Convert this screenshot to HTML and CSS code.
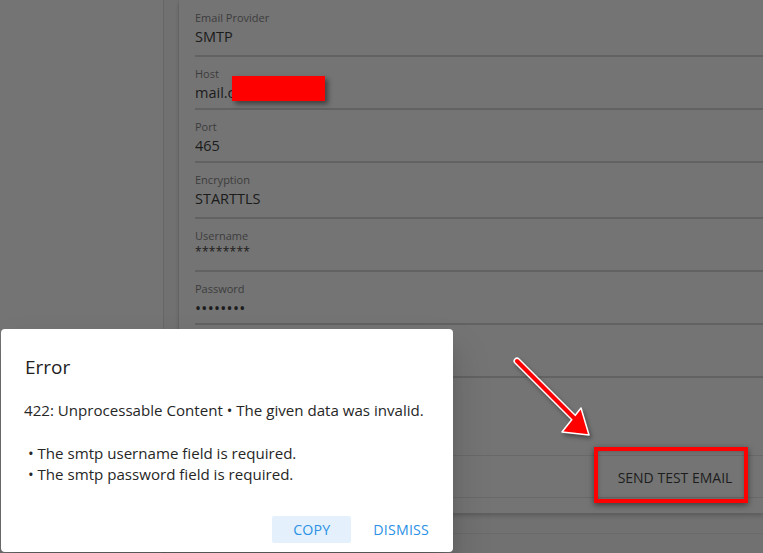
FILE: index.html
```html
<!DOCTYPE html>
<html lang="en">
<head>
    <meta charset="UTF-8">
    <meta name="viewport" content="width=device-width, initial-scale=1.0">
    <title>Email Settings</title>
    <link rel="stylesheet" href="styles.css">
</head>
<body>
    <div class="app">
        <aside class="sidebar"></aside>
        <div class="gutter"></div>
        <main class="content">
            <section class="card">
                <div class="fields">
                    <div class="field tall">
                        <div class="field-label">Email Provider</div>
                        <div class="field-value">SMTP</div>
                    </div>
                    <div class="field">
                        <div class="field-label">Host</div>
                        <div class="field-value">mail.c<span class="redact"></span></div>
                    </div>
                    <div class="field">
                        <div class="field-label">Port</div>
                        <div class="field-value">465</div>
                    </div>
                    <div class="field tall">
                        <div class="field-label">Encryption</div>
                        <div class="field-value">STARTTLS</div>
                    </div>
                    <div class="field">
                        <div class="field-label">Username</div>
                        <div class="field-value masked">********</div>
                    </div>
                    <div class="field">
                        <div class="field-label">Password</div>
                        <div class="field-value dots">&bull;&bull;&bull;&bull;&bull;&bull;&bull;&bull;</div>
                    </div>
                    <div class="field">
                        <div class="field-label">From Address</div>
                        <div class="field-value"></div>
                    </div>
                </div>
                <div class="card-actions">
                    <button class="btn-text">SEND TEST EMAIL</button>
                </div>
            </section>
            <div class="below"></div>
        </main>
    </div>

    <!-- annotation arrow -->
    <svg class="arrow" width="90" height="90" viewBox="0 0 90 90">
        <path d="M6 6 L62 62" stroke="#fff" stroke-width="7" stroke-linecap="round" />
        <path d="M51 77 L78 80 L70 53 Z" fill="#f00" stroke="#fff" stroke-width="1.5" stroke-linejoin="round" />
        <path d="M6 6 L64 64" stroke="#f00" stroke-width="4" stroke-linecap="round" />
    </svg>
    <div class="highlight"></div>

    <div class="dialog">
        <h3 class="dialog-title">Error</h3>
        <div class="dialog-text">422: Unprocessable Content &bull; The given data was invalid.

 &bull; The smtp username field is required.
 &bull; The smtp password field is required.</div>
        <div class="dialog-actions">
            <button class="btn-dialog btn-copy">COPY</button>
            <button class="btn-dialog">DISMISS</button>
        </div>
    </div>
</body>
</html>
```

FILE: styles.css
```css
body {
    margin: 0;
    background-color: #747474;
    font-family: "Open Sans", "Noto Sans", sans-serif;
    color: #222;
    overflow: hidden;
}

.app {
    display: flex;
    height: 553px;
}

.sidebar {
    width: 163px;
    flex-shrink: 0;
    border-right: 1px solid #666;
}

.gutter {
    width: 14px;
    flex-shrink: 0;
    background-color: #717171;
    border-right: 1px solid #6b6b6b;
}

.content {
    flex: 1;
    background-color: #717171;
}

.card {
    background-color: #747474;
    padding: 1px 0 15px 16px;
    box-shadow: 0 3px 4px rgba(0, 0, 0, 0.18);
}

.field {
    height: 53px;
    box-sizing: border-box;
    padding-top: 9px;
    border-bottom: 2px solid #626262;
}

.field.tall {
    height: 56px;
}

.field-label {
    font-size: 11px;
    line-height: 16px;
    color: #3c3c3c;
}

.field-value {
    font-size: 14.5px;
    line-height: 22px;
    color: #1b1b1b;
    position: relative;
}

.field-value.masked {
    line-height: 16px;
    font-size: 12px;
    letter-spacing: 0.3px;
}

.field-value.dots {
    font-size: 16px;
    letter-spacing: 0.3px;
}

.redact {
    position: absolute;
    left: 37px;
    top: -6px;
    width: 93px;
    height: 25px;
    background-color: #f00;
    box-shadow: 3px 3px 5px rgba(0, 0, 0, 0.45);
}

.card-actions {
    margin-top: 77px;
    margin-left: -16px;
    height: 41px;
    border-top: 1px solid #696969;
    border-bottom: 1px solid #696969;
    display: flex;
    justify-content: flex-end;
    align-items: center;
    padding-right: 23px;
}

.btn-text {
    background: none;
    border: none;
    font-family: inherit;
    font-size: 14px;
    color: #1d1d1d;
    padding: 0;
    width: 130px;
    height: 36px;
    margin-top: 1px;
}

.below {
    height: 20px;
    border-bottom: 1px solid #6a6a6a;
}

.arrow {
    position: absolute;
    left: 511px;
    top: 355px;
    filter: drop-shadow(2px 3px 2px rgba(0, 0, 0, 0.35));
}

.highlight {
    position: absolute;
    left: 594px;
    top: 447px;
    width: 146px;
    height: 48px;
    border: 4px solid #f00;
    box-shadow: 0 2px 6px rgba(0, 0, 0, 0.5), inset 0 0 4px rgba(0, 0, 0, 0.25);
}

.dialog {
    position: absolute;
    left: 1px;
    top: 329px;
    width: 452px;
    height: 223px;
    box-sizing: border-box;
    background-color: #fff;
    border-radius: 4px;
    box-shadow: 0 11px 15px -7px rgba(0, 0, 0, 0.2), 0 24px 38px 3px rgba(0, 0, 0, 0.14);
    padding: 24px 8px 9px 23px;
    display: flex;
    flex-direction: column;
}

.dialog-title {
    margin: 0 0 19px 1px;
    font-size: 19px;
    font-weight: 500;
    line-height: 28px;
    color: #222;
}

.dialog-text {
    white-space: pre-wrap;
    font-size: 15.1px;
    line-height: 21.3px;
    color: #262626;
}

.dialog-actions {
    margin-top: auto;
    display: flex;
    justify-content: flex-end;
    gap: 6px;
}

.btn-dialog {
    background: none;
    border: none;
    border-radius: 2px;
    font-family: inherit;
    font-size: 14.2px;
    font-weight: 500;
    letter-spacing: 0.2px;
    color: #2b91e6;
    height: 27px;
    padding: 0 16px;
}

.btn-copy {
    background-color: #e4f1fc;
    width: 79px;
    padding: 0;
}
```
